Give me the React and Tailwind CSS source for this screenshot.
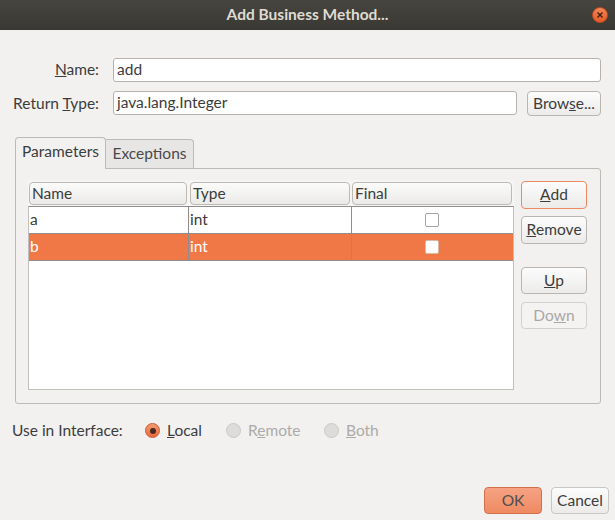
import React from "react";

const rows = [
  { name: "a", type: "int", selected: false },
  { name: "b", type: "int", selected: true },
];

function Btn({ children, className = "", disabled = false, focus = false }) {
  return (
    <div
      className={`flex items-center justify-center rounded-[4px] border ${
        disabled
          ? "border-[#d3d1cd] bg-[#f4f3f2] text-[#a9a8a6]"
          : focus
          ? "border-[#eb8a62] bg-gradient-to-b from-[#fcfcfc] to-[#ecebea] text-[#3c3c3c]"
          : "border-[#b9b6b1] bg-gradient-to-b from-[#fcfcfc] to-[#ecebea] text-[#3c3c3c]"
      } ${className}`}
    >
      {children}
    </div>
  );
}

function Radio({ checked, disabled, children, className = "" }) {
  return (
    <div className={`flex items-center gap-[7px] ${className}`}>
      {checked ? (
        <div className="flex h-[15px] w-[15px] items-center justify-center rounded-full border border-[#c9572f] bg-gradient-to-b from-[#f39a72] to-[#e9693b]">
          <div className="h-[6px] w-[6px] rounded-full bg-[#4a2a1e]" />
        </div>
      ) : (
        <div className="h-[15px] w-[15px] rounded-full border border-[#cbc9c5] bg-[#dddcda]" />
      )}
      <span className={disabled ? "text-[#acaba9]" : "text-[#3c3c3c]"}>{children}</span>
    </div>
  );
}

function Checkbox({ light }) {
  return (
    <div
      className={`h-[14px] w-[14px] rounded-[2px] border bg-white ${
        light ? "border-[#d9b9a8]" : "border-[#a6a4a0]"
      }`}
    />
  );
}

export default function App() {
  return (
    <div className="flex h-[520px] w-[615px] flex-col bg-[#f2f1f0] font-['Lato',sans-serif] text-[15.5px] text-[#3c3c3c]">
      {/* title bar */}
      <div className="relative flex h-[30px] items-center justify-center bg-gradient-to-b from-[#46453f] to-[#393834]">
        <span className="text-[15.5px] font-bold text-[#dfdbd2]">Add Business Method...</span>
        <div className="absolute right-[7px] top-[7px] flex h-[16px] w-[16px] items-center justify-center rounded-full border border-[#c24a1c] bg-gradient-to-b from-[#f28556] to-[#e45a27]">
          <svg width="8" height="8" viewBox="0 0 8 8">
            <path d="M1.5 1.5 L6.5 6.5 M6.5 1.5 L1.5 6.5" stroke="#3b1d10" strokeWidth="1.3" />
          </svg>
        </div>
      </div>

      {/* fields */}
      <div className="mt-[28px] grid grid-cols-[99px_1fr] items-center gap-x-[14px] gap-y-[9px] pr-[14px]">
        <label className="text-right">
          <span className="underline">N</span>ame:
        </label>
        <div className="flex h-[24px] items-center rounded-[3px] border border-[#b6b3ae] bg-white px-[3px]">add</div>
        <label className="text-right">
          Return <span className="underline">T</span>ype:
        </label>
        <div className="flex gap-[10px]">
          <div className="flex h-[24px] flex-1 items-center rounded-[3px] border border-[#b6b3ae] bg-white px-[3px]">
            java.lang.Integer
          </div>
          <Btn className="h-[25px] w-[74px]">
            Brow<span className="underline">s</span>e...
          </Btn>
        </div>
      </div>

      {/* tabs */}
      <div className="mt-[21px] ml-[15px] flex items-end">
        <div className="relative z-10 -mb-px flex h-[32px] w-[91px] items-center justify-center rounded-t-[4px] border border-b-0 border-[#bcbab5] bg-[#f2f1f0] pb-[3px]">
          Parameters
        </div>
        <div className="flex h-[29px] w-[88px] items-center justify-center rounded-tr-[4px] border border-b-0 border-l-0 border-[#bcbab5] bg-[#e7e6e4] text-[#4a4a4a]">
          Exceptions
        </div>
      </div>
      <div className="ml-[15px] flex h-[236px] w-[586px] rounded-b-[3px] rounded-tr-[3px] border border-[#bcbab5] pt-[11px] pl-[12px] pr-[13px] pb-[13px]">
        {/* table */}
        <div className="flex w-[486px] flex-col">
          <div className="grid h-[26px] grid-cols-[161px_163px_1fr] items-center bg-[#f6f5f4] pt-[1px]">
            {["Name", "Type", "Final"].map((h, i) => (
              <div
                key={h}
                className={`flex h-[23px] items-center rounded-[4px] border border-[#bdbab5] bg-gradient-to-b from-[#fbfbfa] to-[#ebeae8] pl-[2px] ${
                  i === 2 ? "ml-0 mr-[2px]" : "ml-[1px] mr-[2px]"
                }`}
              >
                {h}
              </div>
            ))}
          </div>
          <div className="flex flex-1 flex-col border border-[#c2c0bc] border-t-[#8e8e8e] bg-white">
            {rows.map((r) => (
              <div
                key={r.name}
                className={`grid h-[27px] grid-cols-[160px_163px_1fr] border-b border-[#8e8e8e] ${
                  r.selected ? "bg-[#f07746] text-white" : "bg-white"
                }`}
              >
                <div className="flex items-center border-r border-[#8e8e8e] pl-[1px]">{r.name}</div>
                <div className="flex items-center border-r border-[#8e8e8e] pl-[1px]">{r.type}</div>
                <div className="flex items-center justify-center pr-[2px]">
                  <Checkbox light={r.selected} />
                </div>
              </div>
            ))}
          </div>
        </div>

        {/* side buttons */}
        <div className="ml-[7px] flex w-[66px] flex-col pt-[1px]">
          <Btn focus className="h-[28px]">
            <span className="underline">A</span>dd
          </Btn>
          <Btn className="mt-[7px] h-[28px]">
            <span className="underline">R</span>emove
          </Btn>
          <Btn className="mt-[23px] h-[27px]">
            <span className="underline">U</span>p
          </Btn>
          <Btn disabled className="mt-[8px] h-[27px]">
            Do<span className="underline">w</span>n
          </Btn>
        </div>
      </div>

      {/* interface radios */}
      <div className="mt-[15px] flex items-center pl-[12px]">
        <span className="w-[133px]">Use in Interface:</span>
        <div className="flex items-center">
          <Radio checked className="w-[81px]">
            <span className="underline">L</span>ocal
          </Radio>
          <Radio disabled className="w-[98px]">
            R<span className="underline">e</span>mote
          </Radio>
          <Radio disabled>
            <span className="underline">B</span>oth
          </Radio>
        </div>
      </div>

      {/* dialog buttons */}
      <div className="mt-auto mb-[6px] flex justify-end gap-[9px] pr-[6px]">
        <div className="flex h-[27px] w-[58px] items-center justify-center rounded-[4px] border border-[#d0714c] bg-gradient-to-b from-[#f6a283] to-[#ef8a62] text-[#4e4e4e]">
          OK
        </div>
        <Btn className="h-[27px] w-[58px] border-[#c9c7c3]">Cancel</Btn>
      </div>
    </div>
  );
}
